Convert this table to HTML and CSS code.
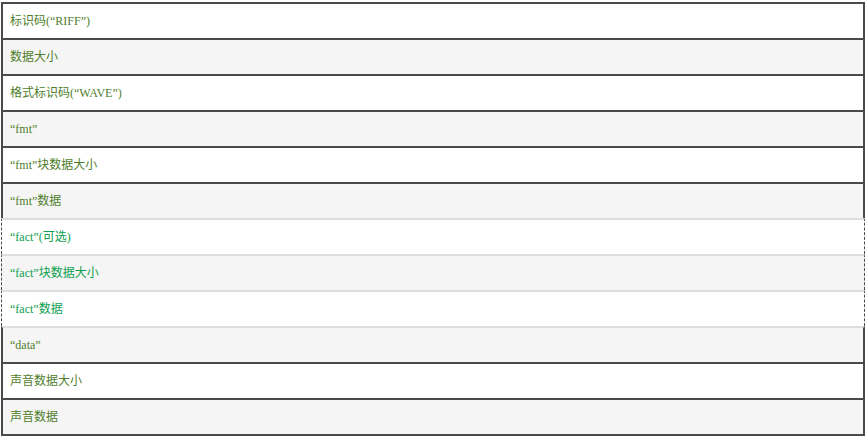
FILE: index.html
```html
<!DOCTYPE html>
<html lang="zh-CN">
<head>
<meta charset="utf-8">
<title>WAVE 文件格式</title>
<link rel="stylesheet" href="styles.css">
</head>
<body>
<div class="wave">
  <div class="row">标识码(“RIFF”)</div>
  <div class="row alt">数据大小</div>
  <div class="row">格式标识码(“WAVE”)</div>
  <div class="row alt">“fmt”</div>
  <div class="row">“fmt”块数据大小</div>
  <div class="row alt">“fmt”数据</div>
  <div class="row opt">“fact”(可选)</div>
  <div class="row alt opt">“fact”块数据大小</div>
  <div class="row opt">“fact”数据</div>
  <div class="row alt after-opt">“data”</div>
  <div class="row">声音数据大小</div>
  <div class="row alt last">声音数据</div>
</div>
</body>
</html>
```
FILE: styles.css
```css
html, body {
  margin: 0;
  padding: 0;
  background: #ffffff;
}
body {
  padding: 2px 2px 0 1px;
  font-family: "Liberation Serif", "Noto Sans CJK SC", serif;
  font-size: 12px;
}
.wave {
  width: 864px;
  display: flex;
  flex-direction: column;
}
.row {
  box-sizing: border-box;
  height: 36px;
  line-height: 34px;
  padding-left: 7px;
  color: #4f7d2b;
  background: #ffffff;
  border-top: 2px solid #4a4a4a;
  border-left: 2px solid #4a4a4a;
  border-right: 2px solid #4a4a4a;
}
.row.alt {
  background: #f5f5f5;
}
.row.last {
  height: 38px;
  border-bottom: 2px solid #4a4a4a;
}
.row.opt {
  color: #0aa04f;
  border-top: 2px solid #dedede;
  border-left: 1px dashed #4a4a4a;
  border-right: 1px dashed #4a4a4a;
  padding-left: 8px;
}
.row.after-opt {
  border-top: 2px solid #dedede;
}
```
